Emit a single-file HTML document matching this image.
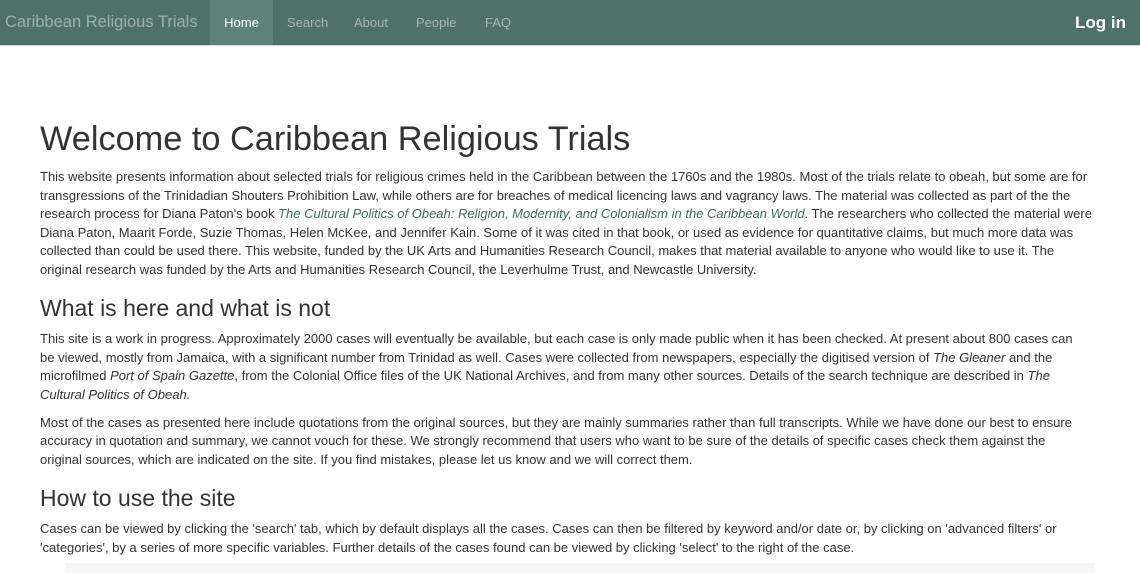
<!DOCTYPE html>
<html><head><meta charset="utf-8"><style>
body{margin:0;font-family:"Liberation Sans",Arial,sans-serif;background:#fff;color:#333;width:1140px;height:570px;overflow:hidden}
.nav{height:45px;background:#4f7168;border-bottom:1px solid #c9d9d3;position:relative}
.brand{position:absolute;left:5px;top:13px;font-size:16.5px;color:#9bb2ab}
.nav a{position:absolute;top:0;height:45px;line-height:45px;font-size:13px;color:#a3b8b2;text-decoration:none}
.home{left:210px;width:63px;text-align:center;background:#5e8278;color:#fff!important}
.login{right:14px;font-size:17px!important;font-weight:bold;color:#fff!important}
.c{position:absolute;left:40px;top:119px;width:1080px}
h1{font-size:34.3px;font-weight:normal;margin:0 0 9px;color:#333;line-height:40px}
h2{font-size:23px;font-weight:normal;margin:16px 0 8px;line-height:27px}
p{font-size:13px;line-height:18.5px;margin:0 0 9.5px;white-space:nowrap}
i.l{color:#3e6b5e}
.foot{position:absolute;left:65px;top:563px;width:1030px;height:10px;background:#f6f6f6}
</style></head><body>
<div class="nav"><span class="brand">Caribbean Religious Trials</span>
<a class="home">Home</a><a style="left:287px">Search</a><a style="left:354px">About</a><a style="left:416px">People</a><a style="left:485px">FAQ</a><a class="login">Log in</a></div>
<div class="c">
<h1>Welcome to Caribbean Religious Trials</h1>
<p>This website presents information about selected trials for religious crimes held in the Caribbean between the 1760s and the 1980s. Most of the trials relate to obeah, but some are for<br>transgressions of the Trinidadian Shouters Prohibition Law, while others are for breaches of medical licencing laws and vagrancy laws. The material was collected as part of the the<br>research process for Diana Paton's book <i class="l">The Cultural Politics of Obeah: Religion, Modernity, and Colonialism in the Caribbean World</i>. The researchers who collected the material were<br>Diana Paton, Maarit Forde, Suzie Thomas, Helen McKee, and Jennifer Kain. Some of it was cited in that book, or used as evidence for quantitative claims, but much more data was<br>collected than could be used there. This website, funded by the UK Arts and Humanities Research Council, makes that material available to anyone who would like to use it. The<br>original research was funded by the Arts and Humanities Research Council, the Leverhulme Trust, and Newcastle University.</p>
<h2>What is here and what is not</h2>
<p>This site is a work in progress. Approximately 2000 cases will eventually be available, but each case is only made public when it has been checked. At present about 800 cases can<br>be viewed, mostly from Jamaica, with a significant number from Trinidad as well. Cases were collected from newspapers, especially the digitised version of <i>The Gleaner</i> and the<br>microfilmed <i>Port of Spain Gazette</i>, from the Colonial Office files of the UK National Archives, and from many other sources. Details of the search technique are described in <i>The<br>Cultural Politics of Obeah.</i></p>
<p>Most of the cases as presented here include quotations from the original sources, but they are mainly summaries rather than full transcripts. While we have done our best to ensure<br>accuracy in quotation and summary, we cannot vouch for these. We strongly recommend that users who want to be sure of the details of specific cases check them against the<br>original sources, which are indicated on the site. If you find mistakes, please let us know and we will correct them.</p>
<h2>How to use the site</h2>
<p>Cases can be viewed by clicking the 'search' tab, which by default displays all the cases. Cases can then be filtered by keyword and/or date or, by clicking on 'advanced filters' or<br>'categories', by a series of more specific variables. Further details of the cases found can be viewed by clicking 'select' to the right of the case.</p>
</div>
<div class="foot"></div>
</body></html>
